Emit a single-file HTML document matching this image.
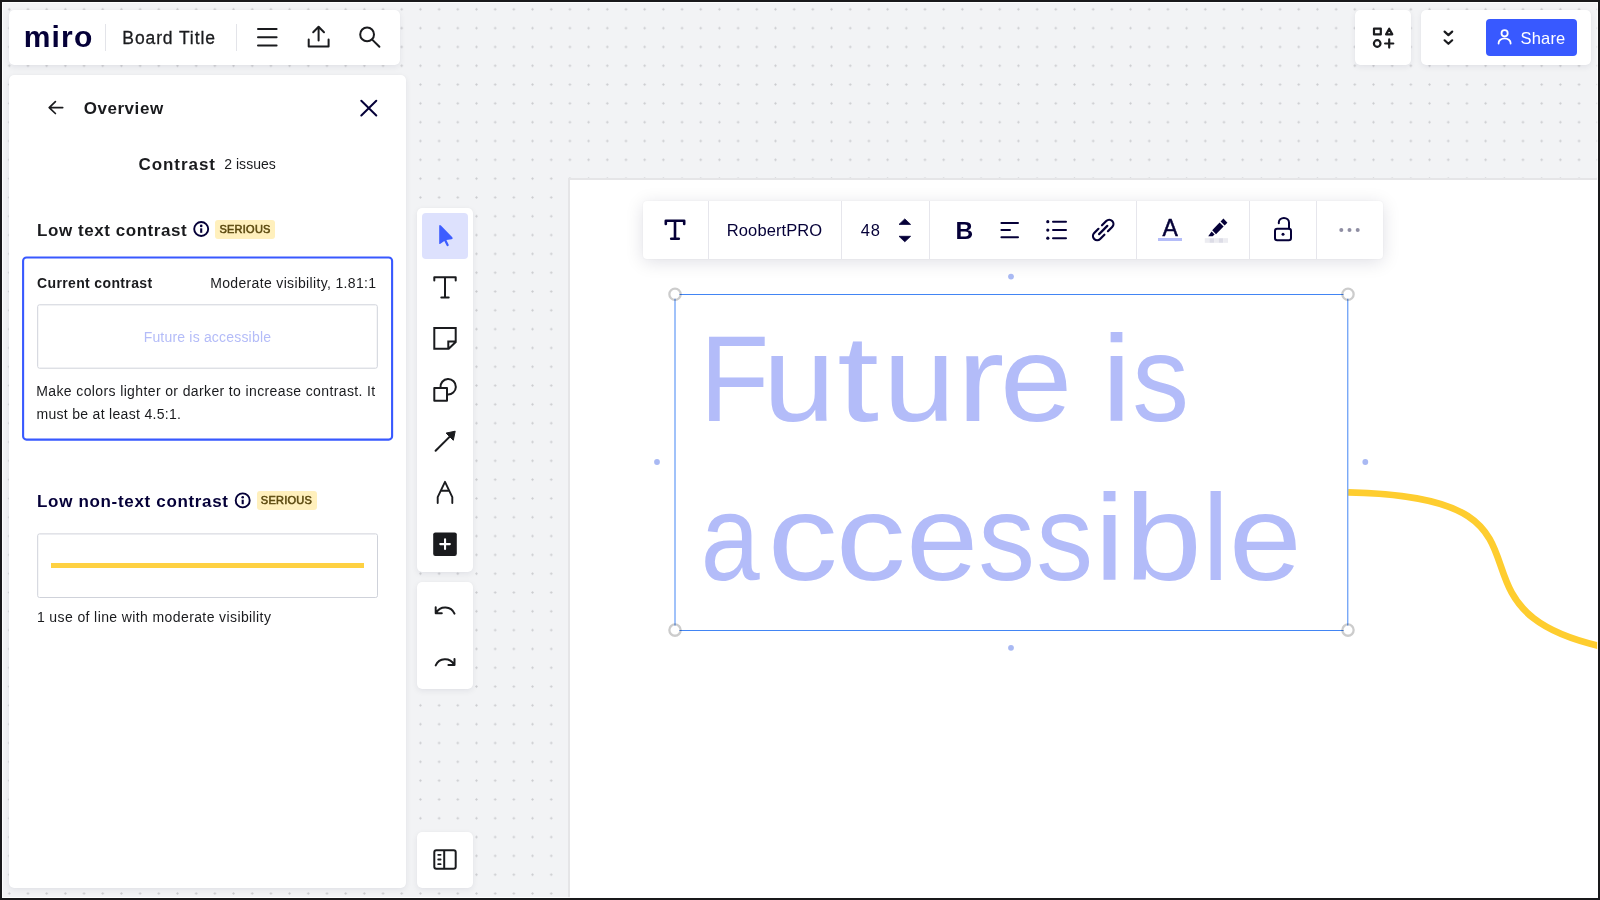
<!DOCTYPE html>
<html lang="en"><head><meta charset="utf-8"><title>Miro – Accessibility checker: Contrast</title>
<style>
html,body{margin:0;padding:0;}
body{width:1600px;height:900px;overflow:hidden;position:relative;background-color:#f2f3f5;
background-image:radial-gradient(circle at center,#cacbce 0,#cacbce .75px,rgba(202,203,206,0) 1.45px);
background-size:18.69px 18.82px;background-position:-0.05px -0.1px;
font-family:"Liberation Sans",sans-serif;}
.b{position:absolute;}
#txt{position:absolute;left:0;top:0;width:1600px;height:900px;will-change:transform;}
.t{position:absolute;white-space:nowrap;line-height:1;}
.t span{display:inline-block;}
#ico{position:absolute;left:0;top:0;}
#frame{position:absolute;left:0;top:0;width:1600px;height:900px;box-sizing:border-box;border:2px solid #19191b;box-shadow:inset 0 0 0 1px rgba(255,255,255,.85);pointer-events:none;}
</style></head><body>
<div class="b" style="left:568px;top:178px;width:1032px;height:722px;border-radius:0px;background:#fff;border-left:2px solid #e5e5e7;border-top:2px solid #e5e5e7;box-sizing:border-box;"></div>
<div class="b" style="left:9px;top:9.5px;width:391px;height:55.0px;border-radius:5px;background:#fff;box-shadow:0 2px 6px rgba(5,0,56,.07),0 0 1px rgba(5,0,56,.05);"></div>
<div class="b" style="left:9px;top:75px;width:397px;height:812.5px;border-radius:5px;background:#fff;box-shadow:0 2px 6px rgba(5,0,56,.07),0 0 1px rgba(5,0,56,.05);"></div>
<div class="b" style="left:417px;top:208px;width:56px;height:364px;border-radius:5px;background:#fff;box-shadow:0 2px 6px rgba(5,0,56,.07),0 0 1px rgba(5,0,56,.05);"></div>
<div class="b" style="left:417px;top:582px;width:56px;height:107px;border-radius:5px;background:#fff;box-shadow:0 2px 6px rgba(5,0,56,.07),0 0 1px rgba(5,0,56,.05);"></div>
<div class="b" style="left:417px;top:831.5px;width:56px;height:56.0px;border-radius:5px;background:#fff;box-shadow:0 2px 6px rgba(5,0,56,.07),0 0 1px rgba(5,0,56,.05);"></div>
<div class="b" style="left:1355px;top:9.5px;width:56px;height:55.5px;border-radius:5px;background:#fff;box-shadow:0 2px 6px rgba(5,0,56,.07),0 0 1px rgba(5,0,56,.05);"></div>
<div class="b" style="left:1421px;top:9.5px;width:170px;height:55.5px;border-radius:5px;background:#fff;box-shadow:0 2px 6px rgba(5,0,56,.07),0 0 1px rgba(5,0,56,.05);"></div>
<div class="b" style="left:1486px;top:18.7px;width:91px;height:37.3px;border-radius:4px;background:#3859ff;"></div>
<div class="b" style="left:421.7px;top:212.6px;width:46.60000000000002px;height:46.599999999999994px;border-radius:4px;background:#dde1fd;"></div>
<div class="b" style="left:642.5px;top:201.3px;width:740.0px;height:57.5px;border-radius:4px;background:#fff;box-shadow:0 3px 18px rgba(5,0,56,.13),0 0 2px rgba(5,0,56,.06);"></div>
<div class="b" style="left:105px;top:23.5px;width:1px;height:27.5px;border-radius:0px;background:#e3e4e9;"></div>
<div class="b" style="left:236px;top:23.5px;width:1px;height:27.5px;border-radius:0px;background:#e3e4e9;"></div>
<div class="b" style="left:707.8px;top:201.3px;width:1.0px;height:57.5px;border-radius:0px;background:#e6e6ec;"></div>
<div class="b" style="left:841.3px;top:201.3px;width:1.0px;height:57.5px;border-radius:0px;background:#e6e6ec;"></div>
<div class="b" style="left:929.0px;top:201.3px;width:1.0px;height:57.5px;border-radius:0px;background:#e6e6ec;"></div>
<div class="b" style="left:1136.3px;top:201.3px;width:1.0px;height:57.5px;border-radius:0px;background:#e6e6ec;"></div>
<div class="b" style="left:1249.0px;top:201.3px;width:1.0px;height:57.5px;border-radius:0px;background:#e6e6ec;"></div>
<div class="b" style="left:1316.0px;top:201.3px;width:1.0px;height:57.5px;border-radius:0px;background:#e6e6ec;"></div>
<div class="b" style="left:51px;top:563.2px;width:313px;height:4.7999999999999545px;border-radius:0px;background:#fed142;"></div>
<div class="b" style="left:215.2px;top:219.7px;width:60.0px;height:19.0px;border-radius:3px;background:#fff0bd;"></div>
<div class="b" style="left:256.7px;top:491px;width:60.60000000000002px;height:18.69999999999999px;border-radius:3px;background:#fff0bd;"></div>
<div class="b" style="left:1158px;top:238.1px;width:24px;height:2.5px;border-radius:0px;background:#b4bcf8;"></div>
<div id="txt">
<span class="t" id="logo" style="left:23.66px;top:21.50px;font-size:30px;font-weight:700;color:#050038;letter-spacing:1.191px;">miro</span>
<span class="t" id="title" style="left:122.33px;top:30.19px;font-size:17.5px;font-weight:400;color:#1a1b1e;letter-spacing:0.891px;-webkit-text-stroke:0.3px #1a1b1e;">Board Title</span>
<span class="t" id="overview" style="left:83.70px;top:99.91px;font-size:17px;font-weight:700;color:#1a1b1e;letter-spacing:0.545px;">Overview</span>
<span class="t" id="contrast" style="left:138.45px;top:155.91px;font-size:17px;font-weight:700;color:#1a1b1e;letter-spacing:0.951px;">Contrast</span>
<span class="t" id="issues" style="left:224.20px;top:157.05px;font-size:14px;font-weight:400;color:#1a1b1e;letter-spacing:0.042px;">2 issues</span>
<span class="t" id="lowtext" style="left:37.02px;top:221.51px;font-size:17px;font-weight:700;color:#1a1b1e;letter-spacing:0.555px;">Low text contrast</span>
<span class="t" id="ser1" style="left:219.44px;top:223.59px;font-size:11px;font-weight:400;color:#5c4a10;letter-spacing:0.244px;-webkit-text-stroke:0.55px #5c4a10;">SERIOUS</span>
<span class="t" id="curr" style="left:37.00px;top:276.15px;font-size:14px;font-weight:700;color:#1a1b1e;letter-spacing:0.36px;">Current contrast</span>
<span class="t" id="mod" style="left:210.14px;top:276.05px;font-size:14px;font-weight:400;color:#1a1b1e;letter-spacing:0.348px;">Moderate visibility, 1.81:1</span>
<span class="t" id="fut" style="left:143.66px;top:329.95px;font-size:14px;font-weight:400;color:#b4bcf8;letter-spacing:0.189px;">Future is accessible</span>
<span class="t" id="make1" style="left:36.29px;top:383.95px;font-size:14px;font-weight:400;color:#1a1b1e;letter-spacing:0.376px;">Make colors lighter or darker to increase contrast. It</span>
<span class="t" id="make2" style="left:36.42px;top:406.75px;font-size:14px;font-weight:400;color:#1a1b1e;letter-spacing:0.309px;">must be at least 4.5:1.</span>
<span class="t" id="lownon" style="left:37.02px;top:492.81px;font-size:17px;font-weight:700;color:#050038;letter-spacing:0.673px;">Low non-text contrast</span>
<span class="t" id="ser2" style="left:260.82px;top:494.89px;font-size:11px;font-weight:400;color:#5c4a10;letter-spacing:0.239px;-webkit-text-stroke:0.55px #5c4a10;">SERIOUS</span>
<span class="t" id="use" style="left:36.88px;top:610.15px;font-size:14px;font-weight:400;color:#1a1b1e;letter-spacing:0.394px;">1 use of line with moderate visibility</span>
<span class="t" id="font" style="left:726.87px;top:222.33px;font-size:16.5px;font-weight:400;color:#050038;letter-spacing:0.084px;">RoobertPRO</span>
<span class="t" id="size" style="left:860.85px;top:222.33px;font-size:16.5px;font-weight:400;color:#050038;letter-spacing:0.8px;">48</span>
<span class="t" id="bold" style="left:955.46px;top:219.26px;font-size:24.5px;font-weight:700;color:#050038;">B</span>
<span class="t" id="acol" style="left:1162.44px;top:217.03px;font-size:23px;font-weight:400;color:#050038;-webkit-text-stroke:0.5px #050038;">A</span>
<span class="t" id="share" style="left:1520.62px;top:29.53px;font-size:16.5px;font-weight:400;color:#ffffff;letter-spacing:0.142px;">Share</span>
<span class="t" id="big1" style="left:702.34px;top:316.78px;font-size:123px;font-weight:400;color:#b3bcf9;"><span id="big1_0" style="margin-left:-5.02px;transform:scaleX(0.925)">F</span><span id="big1_1" style="margin-left:-7.50px;transform:scaleX(1.056)">u</span><span id="big1_2" style="margin-left:7.71px;transform:scaleX(1.220)">t</span><span id="big1_3" style="margin-left:10.00px;transform:scaleX(1.052)">u</span><span id="big1_4" style="margin-left:6.26px;transform:scaleX(1.163)">r</span><span id="big1_5" style="margin-left:1.28px;transform:scaleX(1.057)">e</span> <span id="big1_7" style="margin-left:-1.78px;transform:scaleX(1.083)">i</span><span id="big1_8" style="margin-left:-0.71px;transform:scaleX(0.923)">s</span></span>
<span class="t" id="big2" style="left:704.07px;top:475.88px;font-size:123px;font-weight:400;color:#b3bcf9;"><span id="big2_0" style="margin-left:-8.16px;transform:scaleX(0.861)">a</span><span id="big2_1" style="margin-left:7.42px;transform:scaleX(1.138)">c</span><span id="big2_2" style="margin-left:7.07px;transform:scaleX(1.138)">c</span><span id="big2_3" style="margin-left:6.06px;transform:scaleX(1.050)">e</span><span id="big2_4" style="margin-left:-0.54px;transform:scaleX(0.923)">s</span><span id="big2_5" style="margin-left:-2.91px;transform:scaleX(0.925)">s</span><span id="big2_6" style="margin-left:0.10px;transform:scaleX(1.102)">i</span><span id="big2_7" style="margin-left:5.47px;transform:scaleX(1.127)">b</span><span id="big2_8" style="margin-left:4.36px;transform:scaleX(0.944)">l</span><span id="big2_9" style="margin-left:2.50px;transform:scaleX(1.062)">e</span></span>
</div>
<svg id="ico" width="1600" height="900" viewBox="0 0 1600 900">
<rect x="23.1" y="257.45" width="369" height="182.15" rx="3.4" stroke="#3859ff" stroke-width="2.1" fill="none"/>
<rect x="37.7" y="304.8" width="339.6" height="63.4" rx="1.8" stroke="#cfd2da" stroke-width="1" fill="none"/>
<rect x="37.7" y="533.9" width="339.8" height="63.6" rx="1.8" stroke="#cfd2da" stroke-width="1" fill="none"/>
<path d="M258,28.9H276.6M258,37.15H276.6M258,45.4H276.6" stroke="#1a1b1e" stroke-width="2" fill="none" stroke-linecap="round" stroke-linejoin="round" />
<path d="M318.6,27.2V40.4M313.2,32.2L318.6,26.8L324,32.2" stroke="#1a1b1e" stroke-width="2" fill="none" stroke-linecap="round" stroke-linejoin="round" />
<path d="M308.7,39.6V46.5H328.6V39.6" stroke="#1a1b1e" stroke-width="2" fill="none" stroke-linecap="round" stroke-linejoin="round" />
<circle cx="367.1" cy="34.4" r="6.9" stroke="#1a1b1e" stroke-width="2" fill="none"/>
<path d="M372.2,39.6L379.4,46.8" stroke="#1a1b1e" stroke-width="2" fill="none" stroke-linecap="round" stroke-linejoin="round" />
<path d="M62.7,107.6H49.2M55.4,101.7L49.2,107.6L55.4,113.5" stroke="#1a1b1e" stroke-width="1.7" fill="none" stroke-linecap="round" stroke-linejoin="round" />
<path d="M361.3,100.7L376.3,115.5M376.3,100.7L361.3,115.5" stroke="#050038" stroke-width="2" fill="none" stroke-linecap="round" stroke-linejoin="round" />
<circle cx="201.2" cy="229" r="7" stroke="#050038" stroke-width="1.9" fill="none"/>
<circle cx="201.2" cy="225.9" r="1.3" fill="#050038"/>
<path d="M201.2,228.3V232.8" stroke="#050038" stroke-width="2.1" fill="none" stroke-linecap="butt" stroke-linejoin="round" />
<circle cx="242.7" cy="500.4" r="7" stroke="#050038" stroke-width="1.9" fill="none"/>
<circle cx="242.7" cy="497.29999999999995" r="1.3" fill="#050038"/>
<path d="M242.7,499.7V504.2" stroke="#050038" stroke-width="2.1" fill="none" stroke-linecap="butt" stroke-linejoin="round" />
<path d="M439.2,226.2 V243.2 Q439.2,244.6 440.4,243.8 L444.3,240.9 L446.6,245.6 Q447.1,246.6 448.1,246.1 Q449.1,245.6 448.6,244.6 L446.4,240 L451.6,239.3 Q453.6,238.6 452.3,237.2 L440.9,225.4 Q439.2,224.2 439.2,226.2Z" fill="#3d5dff"/>
<path d="M434.3,280.6V277.3H455.7V280.6M445,277.3V297.4M441.3,297.4H448.7" stroke="#1a1b1e" stroke-width="2" fill="none" stroke-linecap="round" stroke-linejoin="round" />
<path d="M434.3,328.1H455.7V342L448.7,348.7H434.3Z M455.7,341.6H448.3V348.7" stroke="#1a1b1e" stroke-width="2" fill="none" stroke-linecap="butt" stroke-linejoin="miter" />
<path d="M434.3,388H447V400.7H434.3Z" stroke="#1a1b1e" stroke-width="2" fill="none" stroke-linecap="round" stroke-linejoin="round" />
<path d="M440.5,387.6A7.7,7.7 0 1 1 447.4,394.4" stroke="#1a1b1e" stroke-width="2" fill="none" stroke-linecap="butt" stroke-linejoin="round" />
<path d="M435.6,450.8L451,435.4" stroke="#1a1b1e" stroke-width="2" fill="none" stroke-linecap="round" stroke-linejoin="round" />
<path d="M455.2,431.2L453.3,440.3L446.1,433.1Z" fill="#1a1b1e" stroke="#1a1b1e" stroke-width="1" stroke-linejoin="round"/>
<path d="M437.7,503V497.2L445,481.8L452.3,497.2V503M441.5,490.8H448.5" stroke="#1a1b1e" stroke-width="1.9" fill="none" stroke-linecap="round" stroke-linejoin="round" />
<rect x="433.2" y="532.4" width="23.6" height="23.6" rx="2.2" fill="#1a1b1e"/>
<path d="M445.05,539.3V548.9M440.25,544.1H449.85" stroke="#fff" stroke-width="2.1" fill="none" stroke-linecap="round" stroke-linejoin="round" />
<path d="M435.7,607.2V613.2H441.8M436.2,612.8A10.2,10.2 0 0 1 454.5,613.6" stroke="#1a1b1e" stroke-width="2" fill="none" stroke-linecap="round" stroke-linejoin="round" />
<path d="M454.5,659V665H448.4M454,664.6A10.2,10.2 0 0 0 435.7,665.4" stroke="#1a1b1e" stroke-width="2" fill="none" stroke-linecap="round" stroke-linejoin="round" />
<rect x="434.3" y="850.2" width="21.4" height="18.6" rx="2" stroke="#1a1b1e" stroke-width="2" fill="none"/>
<path d="M444.2,850.2V868.8" stroke="#1a1b1e" stroke-width="2" fill="none" stroke-linecap="butt" stroke-linejoin="round" />
<path d="M438.2,854.8H440.6M438.2,859.5H440.6M438.2,864.2H440.6" stroke="#1a1b1e" stroke-width="1.8" fill="none" stroke-linecap="round" stroke-linejoin="round" />
<path d="M1374,28.6H1380.8V34.4H1374Z" stroke="#1a1b1e" stroke-width="2.2" fill="none" stroke-linecap="round" stroke-linejoin="round" />
<path d="M1389.2,28.7L1392.3,34.4H1386.1Z" stroke="#1a1b1e" stroke-width="2.2" fill="none" stroke-linecap="round" stroke-linejoin="round" />
<circle cx="1377.2" cy="43.5" r="3.3" stroke="#1a1b1e" stroke-width="2.2" fill="none"/>
<path d="M1389.2,39.4V47.6M1385.1,43.5H1393.3" stroke="#1a1b1e" stroke-width="2.2" fill="none" stroke-linecap="round" stroke-linejoin="round" />
<path d="M1444.6,31.6L1448.4,35.1L1452.2,31.6M1444.6,40.3L1448.4,43.8L1452.2,40.3" stroke="#1a1b1e" stroke-width="2.2" fill="none" stroke-linecap="round" stroke-linejoin="round" />
<circle cx="1504.6" cy="33.2" r="3.1" stroke="#fff" stroke-width="1.8" fill="none"/>
<path d="M1498.6,43.6V43A6,4.6 0 0 1 1510.6,43V43.6" stroke="#fff" stroke-width="1.8" fill="none" stroke-linecap="round" stroke-linejoin="round" />
<path d="M665.8,224V220.8H684.2V224M675,220.8V238.8M671.2,238.8H678.8" stroke="#050038" stroke-width="2.6" fill="none" stroke-linecap="round" stroke-linejoin="round" />
<path d="M904.8,218.9L910.6,224.4H899Z M904.8,241.8L910.6,236.3H899Z" fill="#050038" stroke="#050038" stroke-width="0.8" stroke-linejoin="round"/>
<path d="M1001.4,223.1H1018M1001.4,230.1H1010M1001.4,237.2H1018" stroke="#050038" stroke-width="2" fill="none" stroke-linecap="round" stroke-linejoin="round" />
<circle cx="1047.8" cy="221.7" r="1.6" fill="#050038"/>
<path d="M1053,221.7H1066" stroke="#050038" stroke-width="2" fill="none" stroke-linecap="round" stroke-linejoin="round" />
<circle cx="1047.8" cy="230.1" r="1.6" fill="#050038"/>
<path d="M1053,230.1H1066" stroke="#050038" stroke-width="2" fill="none" stroke-linecap="round" stroke-linejoin="round" />
<circle cx="1047.8" cy="238.2" r="1.6" fill="#050038"/>
<path d="M1053,238.2H1066" stroke="#050038" stroke-width="2" fill="none" stroke-linecap="round" stroke-linejoin="round" />
<g transform="translate(1103.2,230) rotate(-45)" stroke="#050038" stroke-width="2.2" fill="none" stroke-linecap="round"><path d="M-5.8,0H5.8"/><path d="M2.5,-4.2H8.5A4.2,4.2 0 0 1 8.5,4.2H2.5"/><path d="M-2.5,-4.2H-8.5A4.2,4.2 0 0 0 -8.5,4.2H-2.5"/></g>
<g fill="#050038"><path d="M1208.2,236.2L1211.6,231.4L1214.6,234.6L1212.6,236.2Z"/><path d="M1212.2,230.2L1219.6,222.4L1223.6,226.6L1216,234.2Z"/><path d="M1220.6,221.4L1223.4,218.6L1227.4,222.8L1224.6,225.6Z"/></g>
<rect x="1204.80" y="238.2" width="4.64" height="4.6" fill="#ececf1"/>
<rect x="1209.44" y="238.2" width="4.64" height="4.6" fill="#dcdce6"/>
<rect x="1214.08" y="238.2" width="4.64" height="4.6" fill="#ececf1"/>
<rect x="1218.72" y="238.2" width="4.64" height="4.6" fill="#dcdce6"/>
<rect x="1223.36" y="238.2" width="4.64" height="4.6" fill="#ececf1"/>
<rect x="1275" y="228.7" width="16" height="11.6" rx="2.2" stroke="#050038" stroke-width="2" fill="none"/>
<path d="M1289,228.4V222.6A5.1,4.6 0 0 0 1278.8,222.6V223.2" stroke="#050038" stroke-width="2" fill="none" stroke-linecap="round" stroke-linejoin="round" />
<circle cx="1283" cy="234.3" r="1.5" fill="#050038"/>
<circle cx="1341.3" cy="230" r="2" fill="#8f8ea3"/>
<circle cx="1349.5" cy="230" r="2" fill="#8f8ea3"/>
<circle cx="1357.7" cy="230" r="2" fill="#8f8ea3"/>
<path d="M1348.2,492.4C1602.2,497.3 1399,625.4 1650.2,654.7" stroke="#fecd2f" stroke-width="6.7" fill="none" stroke-linecap="butt" stroke-linejoin="round" />
<path d="M675,294.5H1347.8V630.5H675Z" stroke="#4285f4" stroke-width="1" fill="none"/>
<circle cx="675" cy="294.3" r="4.5" fill="#fff"/>
<circle cx="675" cy="294.3" r="5.65" stroke="rgba(0,0,0,.2)" stroke-width="2.3" fill="none"/>
<circle cx="1348" cy="294.3" r="4.5" fill="#fff"/>
<circle cx="1348" cy="294.3" r="5.65" stroke="rgba(0,0,0,.2)" stroke-width="2.3" fill="none"/>
<circle cx="675" cy="630.1" r="4.5" fill="#fff"/>
<circle cx="675" cy="630.1" r="5.65" stroke="rgba(0,0,0,.2)" stroke-width="2.3" fill="none"/>
<circle cx="1348" cy="630.1" r="4.5" fill="#fff"/>
<circle cx="1348" cy="630.1" r="5.65" stroke="rgba(0,0,0,.2)" stroke-width="2.3" fill="none"/>
<circle cx="1011" cy="276.6" r="2.9" fill="#a9b9f3"/>
<circle cx="1011" cy="647.8" r="2.9" fill="#a9b9f3"/>
<circle cx="657" cy="462" r="2.9" fill="#a9b9f3"/>
<circle cx="1365.3" cy="462" r="2.9" fill="#a9b9f3"/>
</svg>
<div id="frame"></div>
</body></html>
